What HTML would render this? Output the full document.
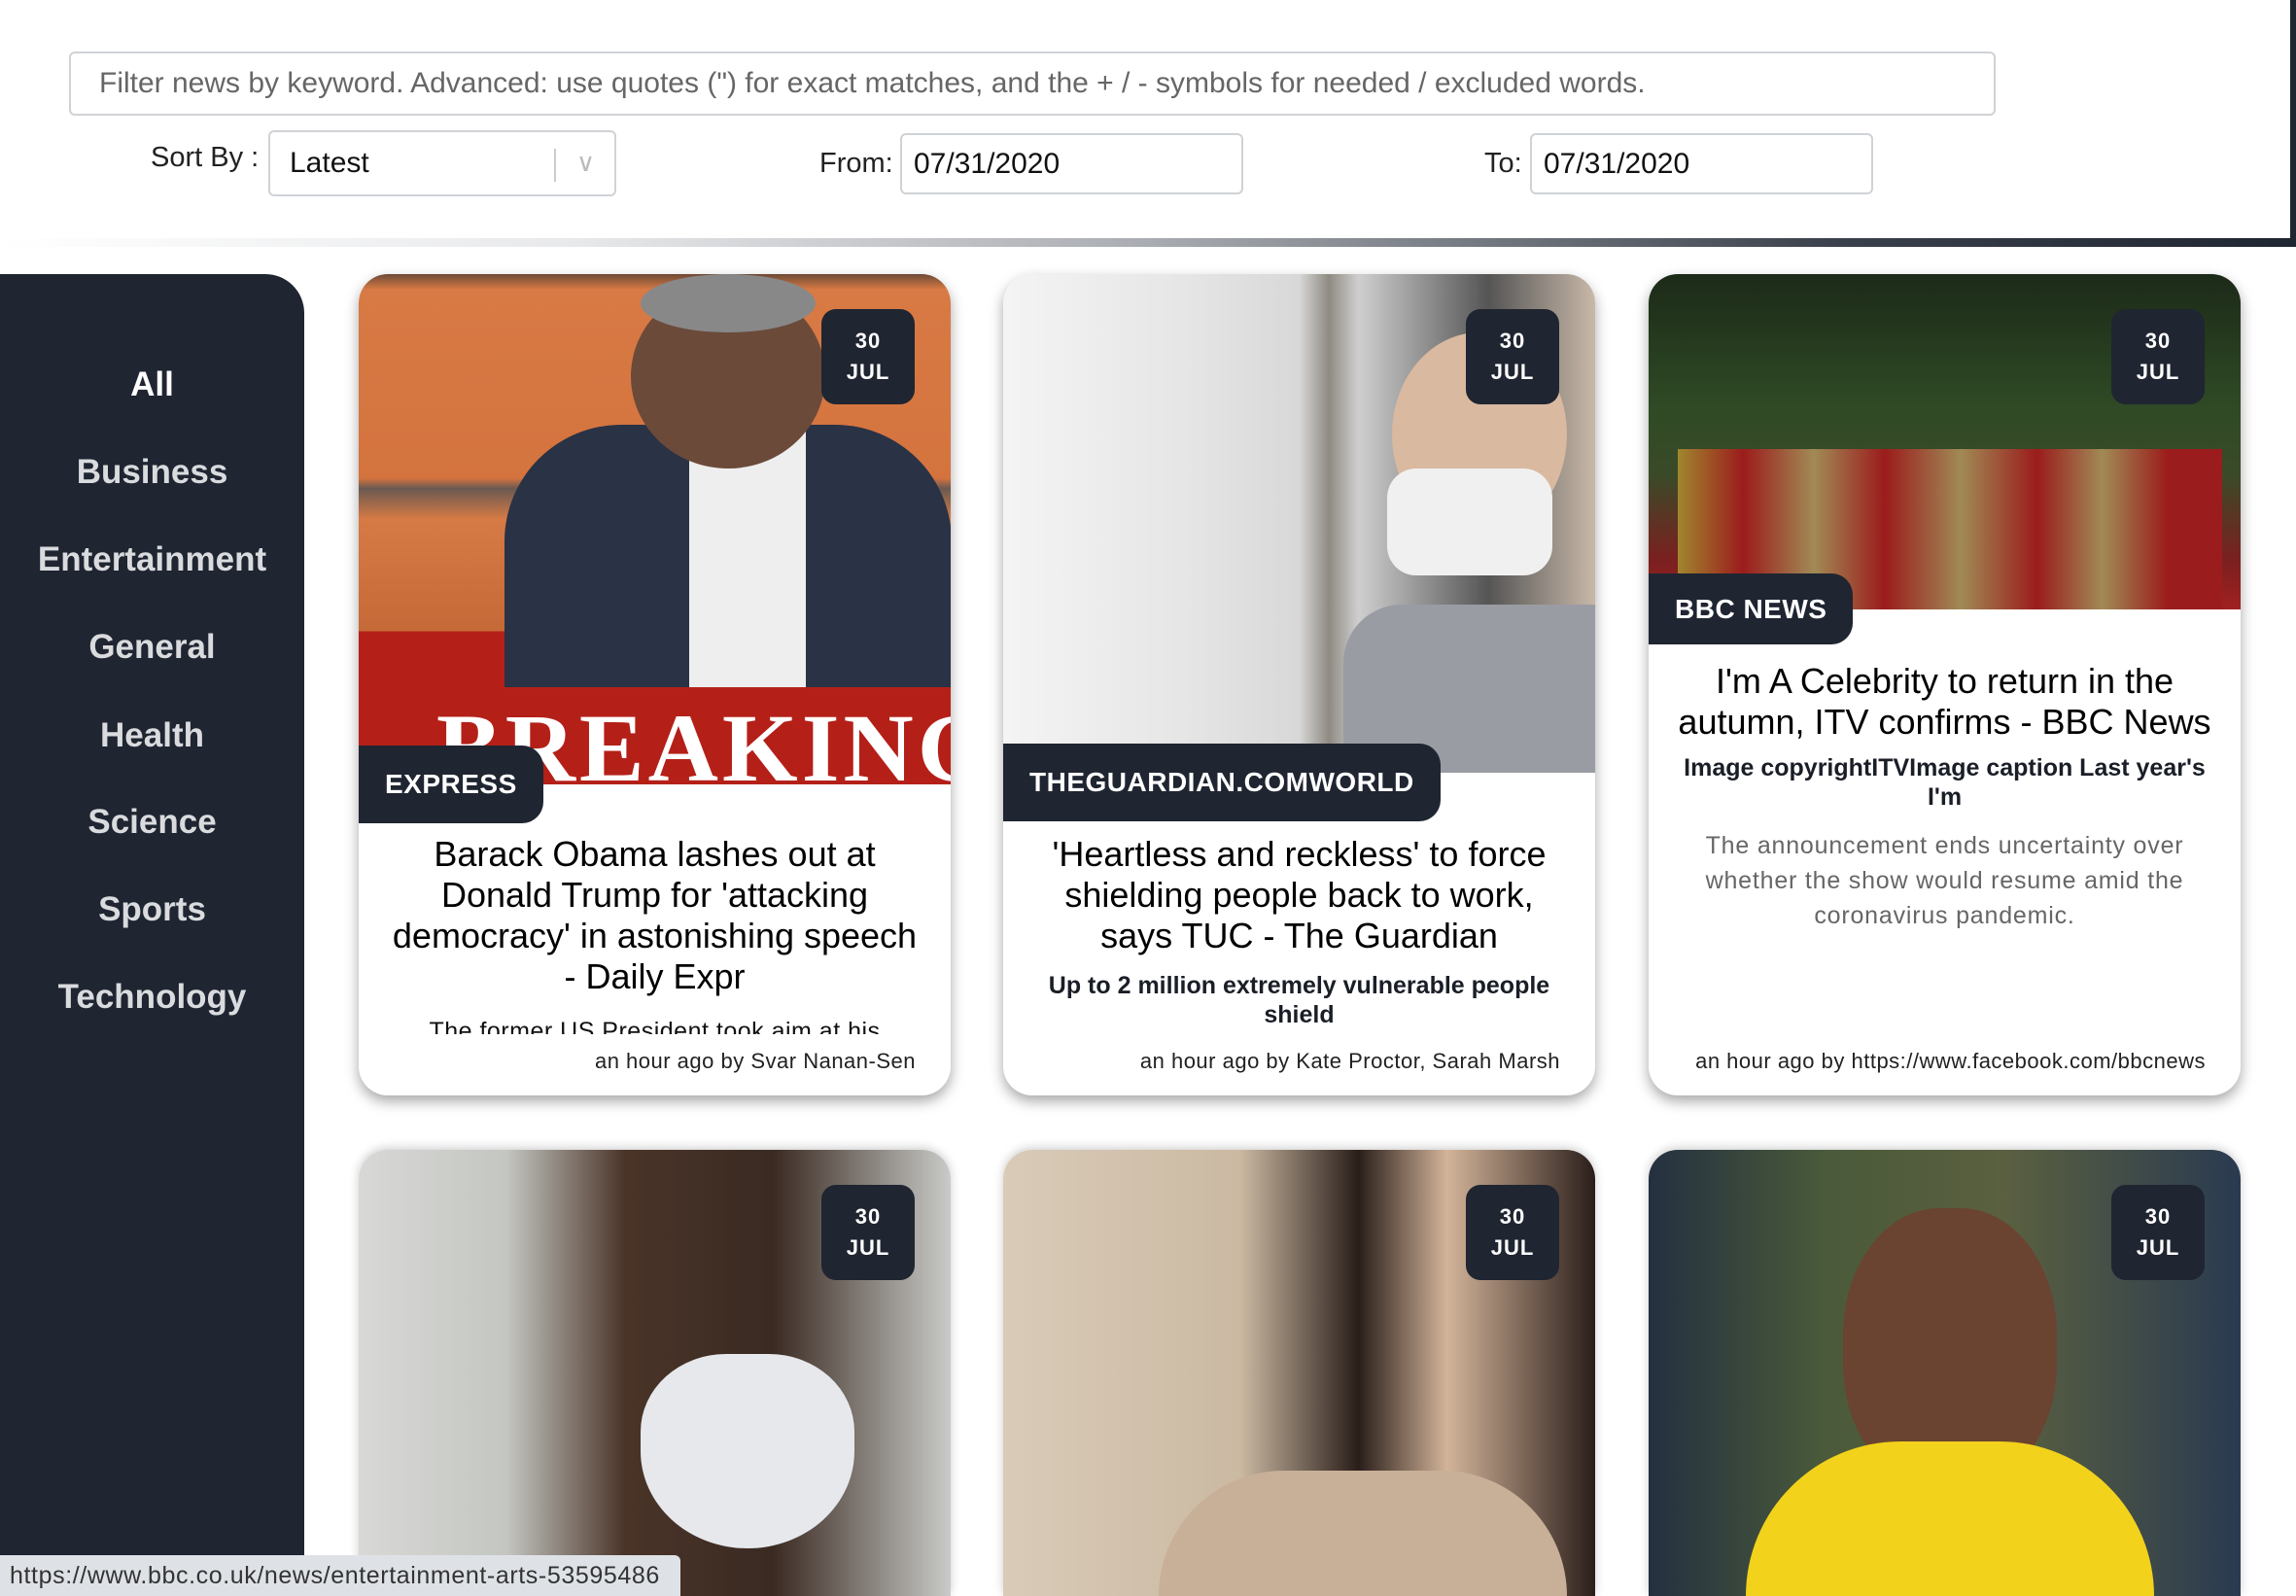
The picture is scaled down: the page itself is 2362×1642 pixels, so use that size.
<!DOCTYPE html>
<html style="width:2362px;height:1642px;overflow:hidden"><head><meta charset="utf-8"><style>
*{box-sizing:border-box;margin:0;padding:0}
body{width:2362px;height:1642px;overflow:hidden;background:#fff;font-family:"Liberation Sans",Arial,sans-serif;position:relative}
.abs{position:absolute}
.inp{position:absolute;border:2px solid #cfd2d6;border-radius:6px;background:#fff;font-size:30px;color:#111;padding-left:12px;display:flex;align-items:center}
.lbl{position:absolute;font-size:29px;color:#222}
.side{position:absolute;left:0;top:282px;width:313px;height:1360px;background:#1f2531;border-top-right-radius:40px}
.nav{position:absolute;left:0;width:313px;text-align:center;font-weight:bold;font-size:35px;color:#d9dbde}
.card{position:absolute;width:609px;height:845px;border-radius:30px;background:#fff;box-shadow:0 6px 14px rgba(0,0,0,.35);overflow:hidden}
.r2{height:459px;border-radius:30px 30px 0 0;box-shadow:0 -2px 10px rgba(0,0,0,.2)}
.img{position:absolute;left:0;top:0;width:609px}
.date{position:absolute;left:476px;top:36px;width:96px;height:98px;background:#1f2531;border-radius:15px;color:#fff;font-weight:bold;font-size:22px;text-align:center;line-height:32px;padding-top:17px;letter-spacing:1px}
.src{position:absolute;left:0;background:#1f2531;color:#fff;font-weight:bold;font-size:28px;height:80px;line-height:80px;padding:0 27px;border-top-right-radius:22px;border-bottom-right-radius:22px;letter-spacing:.5px}
.title{position:absolute;left:30px;width:549px;text-align:center;font-size:36px;line-height:42px;color:#000}
.desc{position:absolute;left:20px;width:569px;text-align:center;font-size:25px;line-height:30px;color:#1a1e27;font-weight:bold;letter-spacing:0}
.gray{position:absolute;left:40px;width:529px;text-align:center;font-size:25px;line-height:36px;color:#666;letter-spacing:.8px}
.foot{position:absolute;right:36px;top:797px;font-size:22px;color:#222;letter-spacing:.5px;white-space:nowrap}
</style></head><body>
<div class="inp" style="left:71px;top:53px;width:1982px;height:66px;color:#666;font-size:30px;padding-left:29px">Filter news by keyword. Advanced: use quotes (") for exact matches, and the + / - symbols for needed / excluded words.</div>
<div class="lbl" style="left:155px;top:146px">Sort By :</div>
<div class="inp" style="left:276px;top:134px;width:358px;height:68px;padding-left:20px">Latest
<div class="abs" style="left:292px;top:17px;width:2px;height:34px;background:#ccc"></div>
<div class="abs" style="left:315px;top:16px;color:#bbb;font-size:26px">&#8744;</div></div>
<div class="lbl" style="left:843px;top:152px">From:</div>
<div class="inp" style="left:926px;top:137px;width:353px;height:63px">07/31/2020</div>
<div class="lbl" style="left:1527px;top:152px">To:</div>
<div class="inp" style="left:1574px;top:137px;width:353px;height:63px">07/31/2020</div>
<div class="abs" style="left:0;top:245px;width:2362px;height:9px;background:linear-gradient(90deg,#fff 0%,#e8e9eb 25%,#a9acb1 50%,#3b414c 80%,#1f2531 100%)"></div>
<div class="abs" style="left:2356px;top:0;width:6px;height:254px;background:#1f2531"></div>

<div class="side">
<div class="nav" style="top:94px;color:#fff">All</div>
<div class="nav" style="top:184px">Business</div>
<div class="nav" style="top:274px">Entertainment</div>
<div class="nav" style="top:364px">General</div>
<div class="nav" style="top:455px">Health</div>
<div class="nav" style="top:544px">Science</div>
<div class="nav" style="top:634px">Sports</div>
<div class="nav" style="top:724px">Technology</div>
</div>

<div class="card" style="left:369px;top:282px">
<div class="img" style="height:525px;background:linear-gradient(180deg,#6d4a36 0,#d87a45 3%,#d4733e 40%,#6a5a52 42%,#d67a45 48%,#c56938 70%,#b42018 70%,#b42018 100%)"></div>
<div class="abs" style="left:150px;top:155px;width:460px;height:270px;background:#2a3245;border-radius:120px 120px 0 0"></div>
<div class="abs" style="left:340px;top:160px;width:120px;height:265px;background:#eee"></div>
<div class="abs" style="left:280px;top:10px;width:200px;height:190px;background:#6b4a3a;border-radius:50%"></div>
<div class="abs" style="left:290px;top:0;width:180px;height:60px;background:#888;border-radius:50%"></div>
<div class="abs" style="left:80px;top:448px;font-family:'Liberation Serif',serif;font-weight:bold;font-size:100px;color:#fff;line-height:80px;height:77px;overflow:hidden;letter-spacing:4px">BREAKING</div>
<div class="date">30<br>JUL</div>
<div class="src" style="top:485px">EXPRESS</div>
<div class="title" style="top:576px">Barack Obama lashes out at Donald Trump for 'attacking democracy' in astonishing speech - Daily Expr</div>
<div class="desc" style="top:764px;height:18px;line-height:30px;overflow:hidden;font-weight:normal;color:#111;letter-spacing:.5px">The former US President took aim at his</div>
<div class="foot">an hour ago by Svar Nanan-Sen</div>
</div>

<div class="card" style="left:1032px;top:282px">
<div class="img" style="height:513px;background:linear-gradient(90deg,#f4f4f4 0,#e6e6e6 30%,#d8d8d8 50%,#8f8a82 55%,#cfcfcf 60%,#555 82%,#c8b8a8 100%)"></div>
<div class="abs" style="left:400px;top:60px;width:180px;height:210px;background:#d9b9a0;border-radius:50%"></div>
<div class="abs" style="left:395px;top:200px;width:170px;height:110px;background:#f0f0f0;border-radius:30px"></div>
<div class="abs" style="left:350px;top:340px;width:259px;height:173px;background:#9a9ca3;border-radius:60px 0 0 0"></div>
<div class="date">30<br>JUL</div>
<div class="src" style="top:483px">THEGUARDIAN.COMWORLD</div>
<div class="title" style="top:576px">'Heartless and reckless' to force shielding people back to work, says TUC - The Guardian</div>
<div class="desc" style="top:717px">Up to 2 million extremely vulnerable people shield</div>
<div class="foot">an hour ago by Kate Proctor, Sarah Marsh</div>
</div>

<div class="card" style="left:1696px;top:282px">
<div class="img" style="height:345px;background:linear-gradient(180deg,#1c2a18 0,#2f4a25 40%,#3a4a28 60%,#7a2020 85%,#a02020 100%)"></div>
<div class="abs" style="left:30px;top:180px;width:560px;height:165px;background:linear-gradient(90deg,#a0862e 0,#9b1c1c 12%,#a18a55 25%,#9b1c1c 38%,#a08a55 52%,#9b1c1c 66%,#a08a55 78%,#9b1c1c 90%)"></div>
<div class="date">30<br>JUL</div>
<div class="src" style="top:308px;height:73px;line-height:73px">BBC NEWS</div>
<div class="title" style="top:398px">I'm A Celebrity to return in the autumn, ITV confirms - BBC News</div>
<div class="desc" style="top:493px">Image copyrightITVImage caption Last year's I'm</div>
<div class="gray" style="top:570px">The announcement ends uncertainty over whether the show would resume amid the coronavirus pandemic.</div>
<div class="foot">an hour ago by https://www.facebook.com/bbcnews</div>
</div>

<div class="card r2" style="left:369px;top:1183px">
<div class="img" style="height:459px;background:linear-gradient(90deg,#d8d9d6 0,#c4c6c2 25%,#4a3428 45%,#3a2a22 70%,#c9cbc8 100%)"></div>
<div class="abs" style="left:290px;top:210px;width:220px;height:200px;background:#e6e8ec;border-radius:40% 40% 50% 50%"></div>
<div class="date">30<br>JUL</div>
</div>
<div class="card r2" style="left:1032px;top:1183px">
<div class="img" style="height:459px;background:linear-gradient(90deg,#d9cbb8 0,#cbb9a2 40%,#2a1e1a 60%,#d3b49a 75%,#2a1e1a 100%)"></div>
<div class="abs" style="left:160px;top:330px;width:420px;height:129px;background:#c8b098;border-radius:200px 200px 0 0"></div>
<div class="date">30<br>JUL</div>
</div>
<div class="card r2" style="left:1696px;top:1183px">
<div class="img" style="height:459px;background:linear-gradient(90deg,#243040 0,#4a5a3a 30%,#5a6040 60%,#2a3a50 100%)"></div>
<div class="abs" style="left:200px;top:60px;width:220px;height:290px;background:#6a4430;border-radius:45%"></div>
<div class="abs" style="left:100px;top:300px;width:420px;height:159px;background:#f2d21a;border-radius:180px 180px 0 0"></div>
<div class="date">30<br>JUL</div>
</div>

<div class="abs" style="left:0;top:1600px;width:700px;height:42px;background:#dee2e7;border-top-right-radius:6px;font-size:25px;color:#333;line-height:42px;padding-left:10px;letter-spacing:.6px">https://www.bbc.co.uk/news/entertainment-arts-53595486</div>
</body></html>
